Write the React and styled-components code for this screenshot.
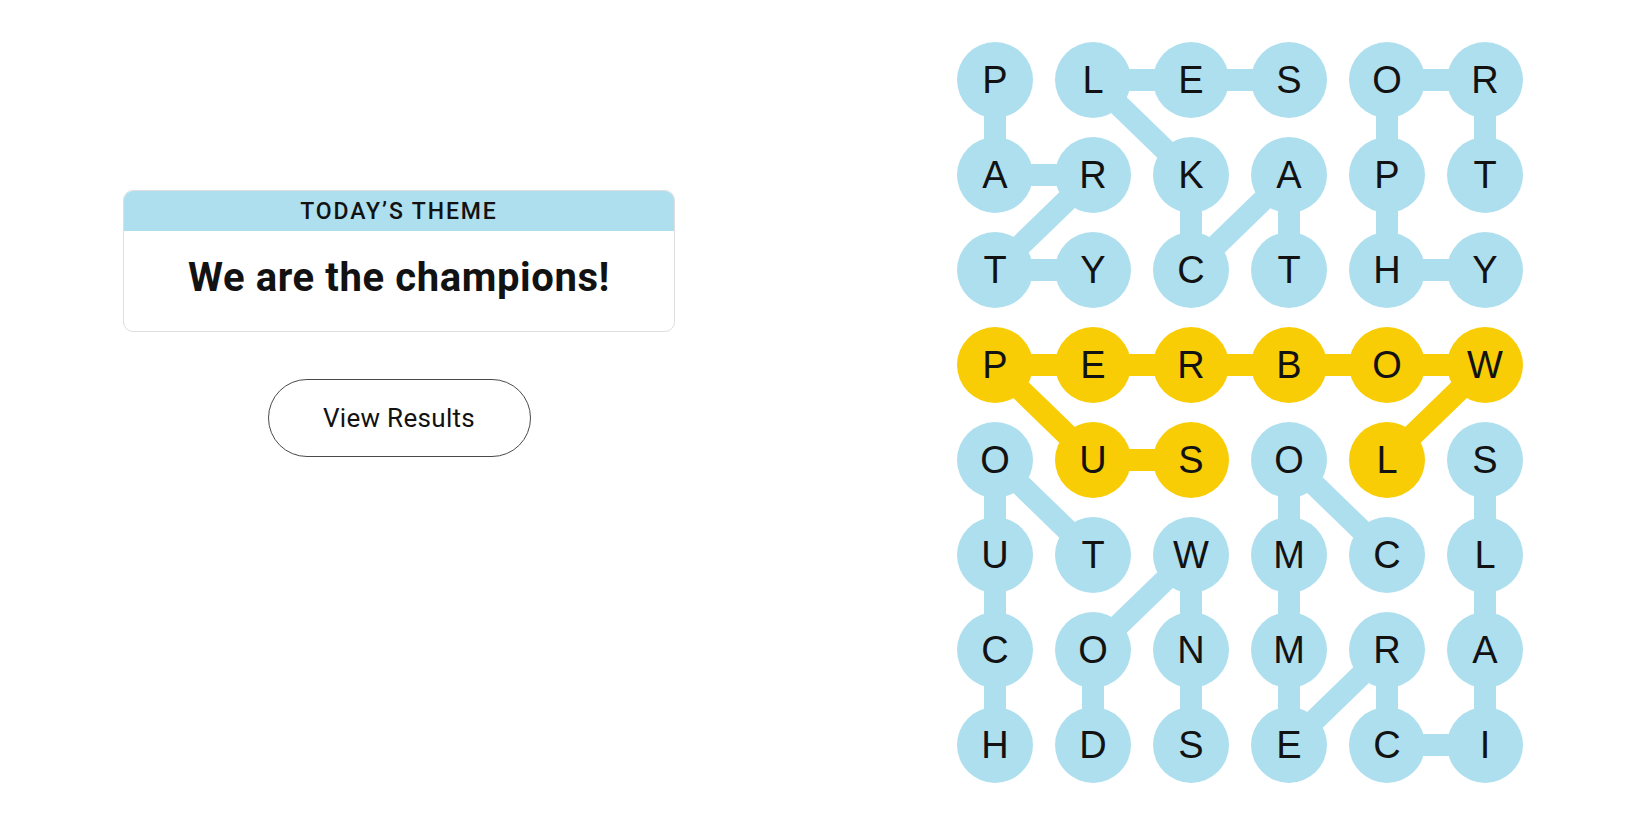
import React from "react";
import styled, { createGlobalStyle } from "styled-components";

const GlobalStyle = createGlobalStyle`
  html, body { margin: 0; padding: 0; background: #ffffff; }
  body { font-family: "Roboto", "Liberation Sans", sans-serif; color: #121212; }
`;

const BLUE = "#aedfee";
const YELLOW = "#f8cd05";

const TILE = 76;
const COL_GAP = 22;
const ROW_GAP = 19;
const COLS = 6;
const ROWS = 8;

const LETTERS = [
  "PLESOR",
  "ARKAPT",
  "TYCTHY",
  "PERBOW",
  "OUSOLS",
  "UTWMCL",
  "CONMRA",
  "HDSECI",
];

const WORDS = [
  { kind: "theme", path: [[0, 0], [1, 0], [1, 1], [2, 0], [2, 1]] },
  { kind: "theme", path: [[2, 3], [1, 3], [2, 2], [1, 2], [0, 1], [0, 2], [0, 3]] },
  { kind: "theme", path: [[1, 5], [0, 5], [0, 4], [1, 4], [2, 4], [2, 5]] },
  { kind: "spangram", path: [[4, 2], [4, 1], [3, 0], [3, 1], [3, 2], [3, 3], [3, 4], [3, 5], [4, 4]] },
  { kind: "theme", path: [[5, 1], [4, 0], [5, 0], [6, 0], [7, 0]] },
  { kind: "theme", path: [[7, 1], [6, 1], [5, 2], [6, 2], [7, 2]] },
  {
    kind: "theme",
    path: [[5, 4], [4, 3], [5, 3], [6, 3], [7, 3], [6, 4], [7, 4], [7, 5], [6, 5], [5, 5], [4, 5]],
  },
];

const kindAt = {};
WORDS.forEach((w) => w.path.forEach(([r, c]) => (kindAt[`${r}-${c}`] = w.kind)));

const cx = (c) => c * (TILE + COL_GAP) + TILE / 2;
const cy = (r) => r * (TILE + ROW_GAP) + TILE / 2;

const Page = styled.main`
  display: flex;
  align-items: flex-start;
  width: 1650px;
  height: 825px;
  overflow: hidden;
`;

const Sidebar = styled.section`
  width: 798px;
  flex: none;
  display: flex;
  flex-direction: column;
  align-items: center;
  padding-top: 190px;
`;

const ThemeCard = styled.div`
  width: 552px;
  box-sizing: border-box;
  border: 1px solid #dedede;
  border-radius: 10px;
  overflow: hidden;
  background: #ffffff;
`;

const ThemeHeader = styled.div`
  height: 40px;
  background: ${BLUE};
  display: flex;
  align-items: center;
  justify-content: center;
  font-family: "Roboto", "Liberation Sans", sans-serif;
  font-size: 23px;
  font-weight: 500;
  letter-spacing: 1.9px;
  color: #121212;
  text-transform: uppercase;
`;

const ThemeBody = styled.div`
  height: 100px;
  display: flex;
  align-items: center;
  justify-content: center;
  padding-bottom: 6px;
  box-sizing: border-box;
`;

const ThemeTitle = styled.h1`
  margin: 0;
  font-family: "Roboto", "Liberation Sans", sans-serif;
  font-size: 40px;
  font-weight: 700;
  letter-spacing: 0.6px;
  line-height: 1.1;
  color: #121212;
`;

const ResultsButton = styled.button`
  margin-top: 47px;
  width: 263px;
  height: 78px;
  box-sizing: border-box;
  border: 1px solid #4a4a4a;
  border-radius: 39px;
  background: #ffffff;
  font-family: "Roboto", "Liberation Sans", sans-serif;
  font-size: 26px;
  font-weight: 400;
  letter-spacing: 0.3px;
  color: #121212;
  cursor: pointer;
`;

const Board = styled.section`
  position: relative;
  margin-left: 159px;
  margin-top: 42px;
  width: ${COLS * TILE + (COLS - 1) * COL_GAP}px;
  height: ${ROWS * TILE + (ROWS - 1) * ROW_GAP}px;
  flex: none;
`;

const Connectors = styled.svg`
  position: absolute;
  inset: 0;
  width: 100%;
  height: 100%;
  z-index: 0;
`;

const LetterGrid = styled.div`
  position: relative;
  z-index: 1;
  display: grid;
  grid-template-columns: repeat(${COLS}, ${TILE}px);
  grid-auto-rows: ${TILE}px;
  column-gap: ${COL_GAP}px;
  row-gap: ${ROW_GAP}px;
`;

const Tile = styled.div`
  width: ${TILE}px;
  height: ${TILE}px;
  border-radius: 50%;
  background: ${(p) => (p.$kind === "spangram" ? YELLOW : BLUE)};
  display: flex;
  align-items: center;
  justify-content: center;
  font-family: "Liberation Sans", "Roboto", sans-serif;
  font-size: 38px;
  font-weight: 400;
  color: #121212;
  line-height: 1;
  user-select: none;
`;

export default function App() {
  const boardW = COLS * TILE + (COLS - 1) * COL_GAP;
  const boardH = ROWS * TILE + (ROWS - 1) * ROW_GAP;
  return (
    <>
      <GlobalStyle />
      <Page>
        <Sidebar>
          <ThemeCard>
            <ThemeHeader>Today’s Theme</ThemeHeader>
            <ThemeBody>
              <ThemeTitle>We are the champions!</ThemeTitle>
            </ThemeBody>
          </ThemeCard>
          <ResultsButton type="button">View Results</ResultsButton>
        </Sidebar>
        <Board aria-label="Strands board">
          <Connectors viewBox={`0 0 ${boardW} ${boardH}`} aria-hidden="true">
            {WORDS.map((w, wi) => (
              <polyline
                key={wi}
                points={w.path.map(([r, c]) => `${cx(c)},${cy(r)}`).join(" ")}
                fill="none"
                stroke={w.kind === "spangram" ? YELLOW : BLUE}
                strokeWidth="22"
                strokeLinejoin="round"
              />
            ))}
          </Connectors>
          <LetterGrid>
            {LETTERS.flatMap((row, r) =>
              row.split("").map((ch, c) => (
                <Tile key={`${r}-${c}`} $kind={kindAt[`${r}-${c}`]}>
                  {ch}
                </Tile>
              ))
            )}
          </LetterGrid>
        </Board>
      </Page>
    </>
  );
}
